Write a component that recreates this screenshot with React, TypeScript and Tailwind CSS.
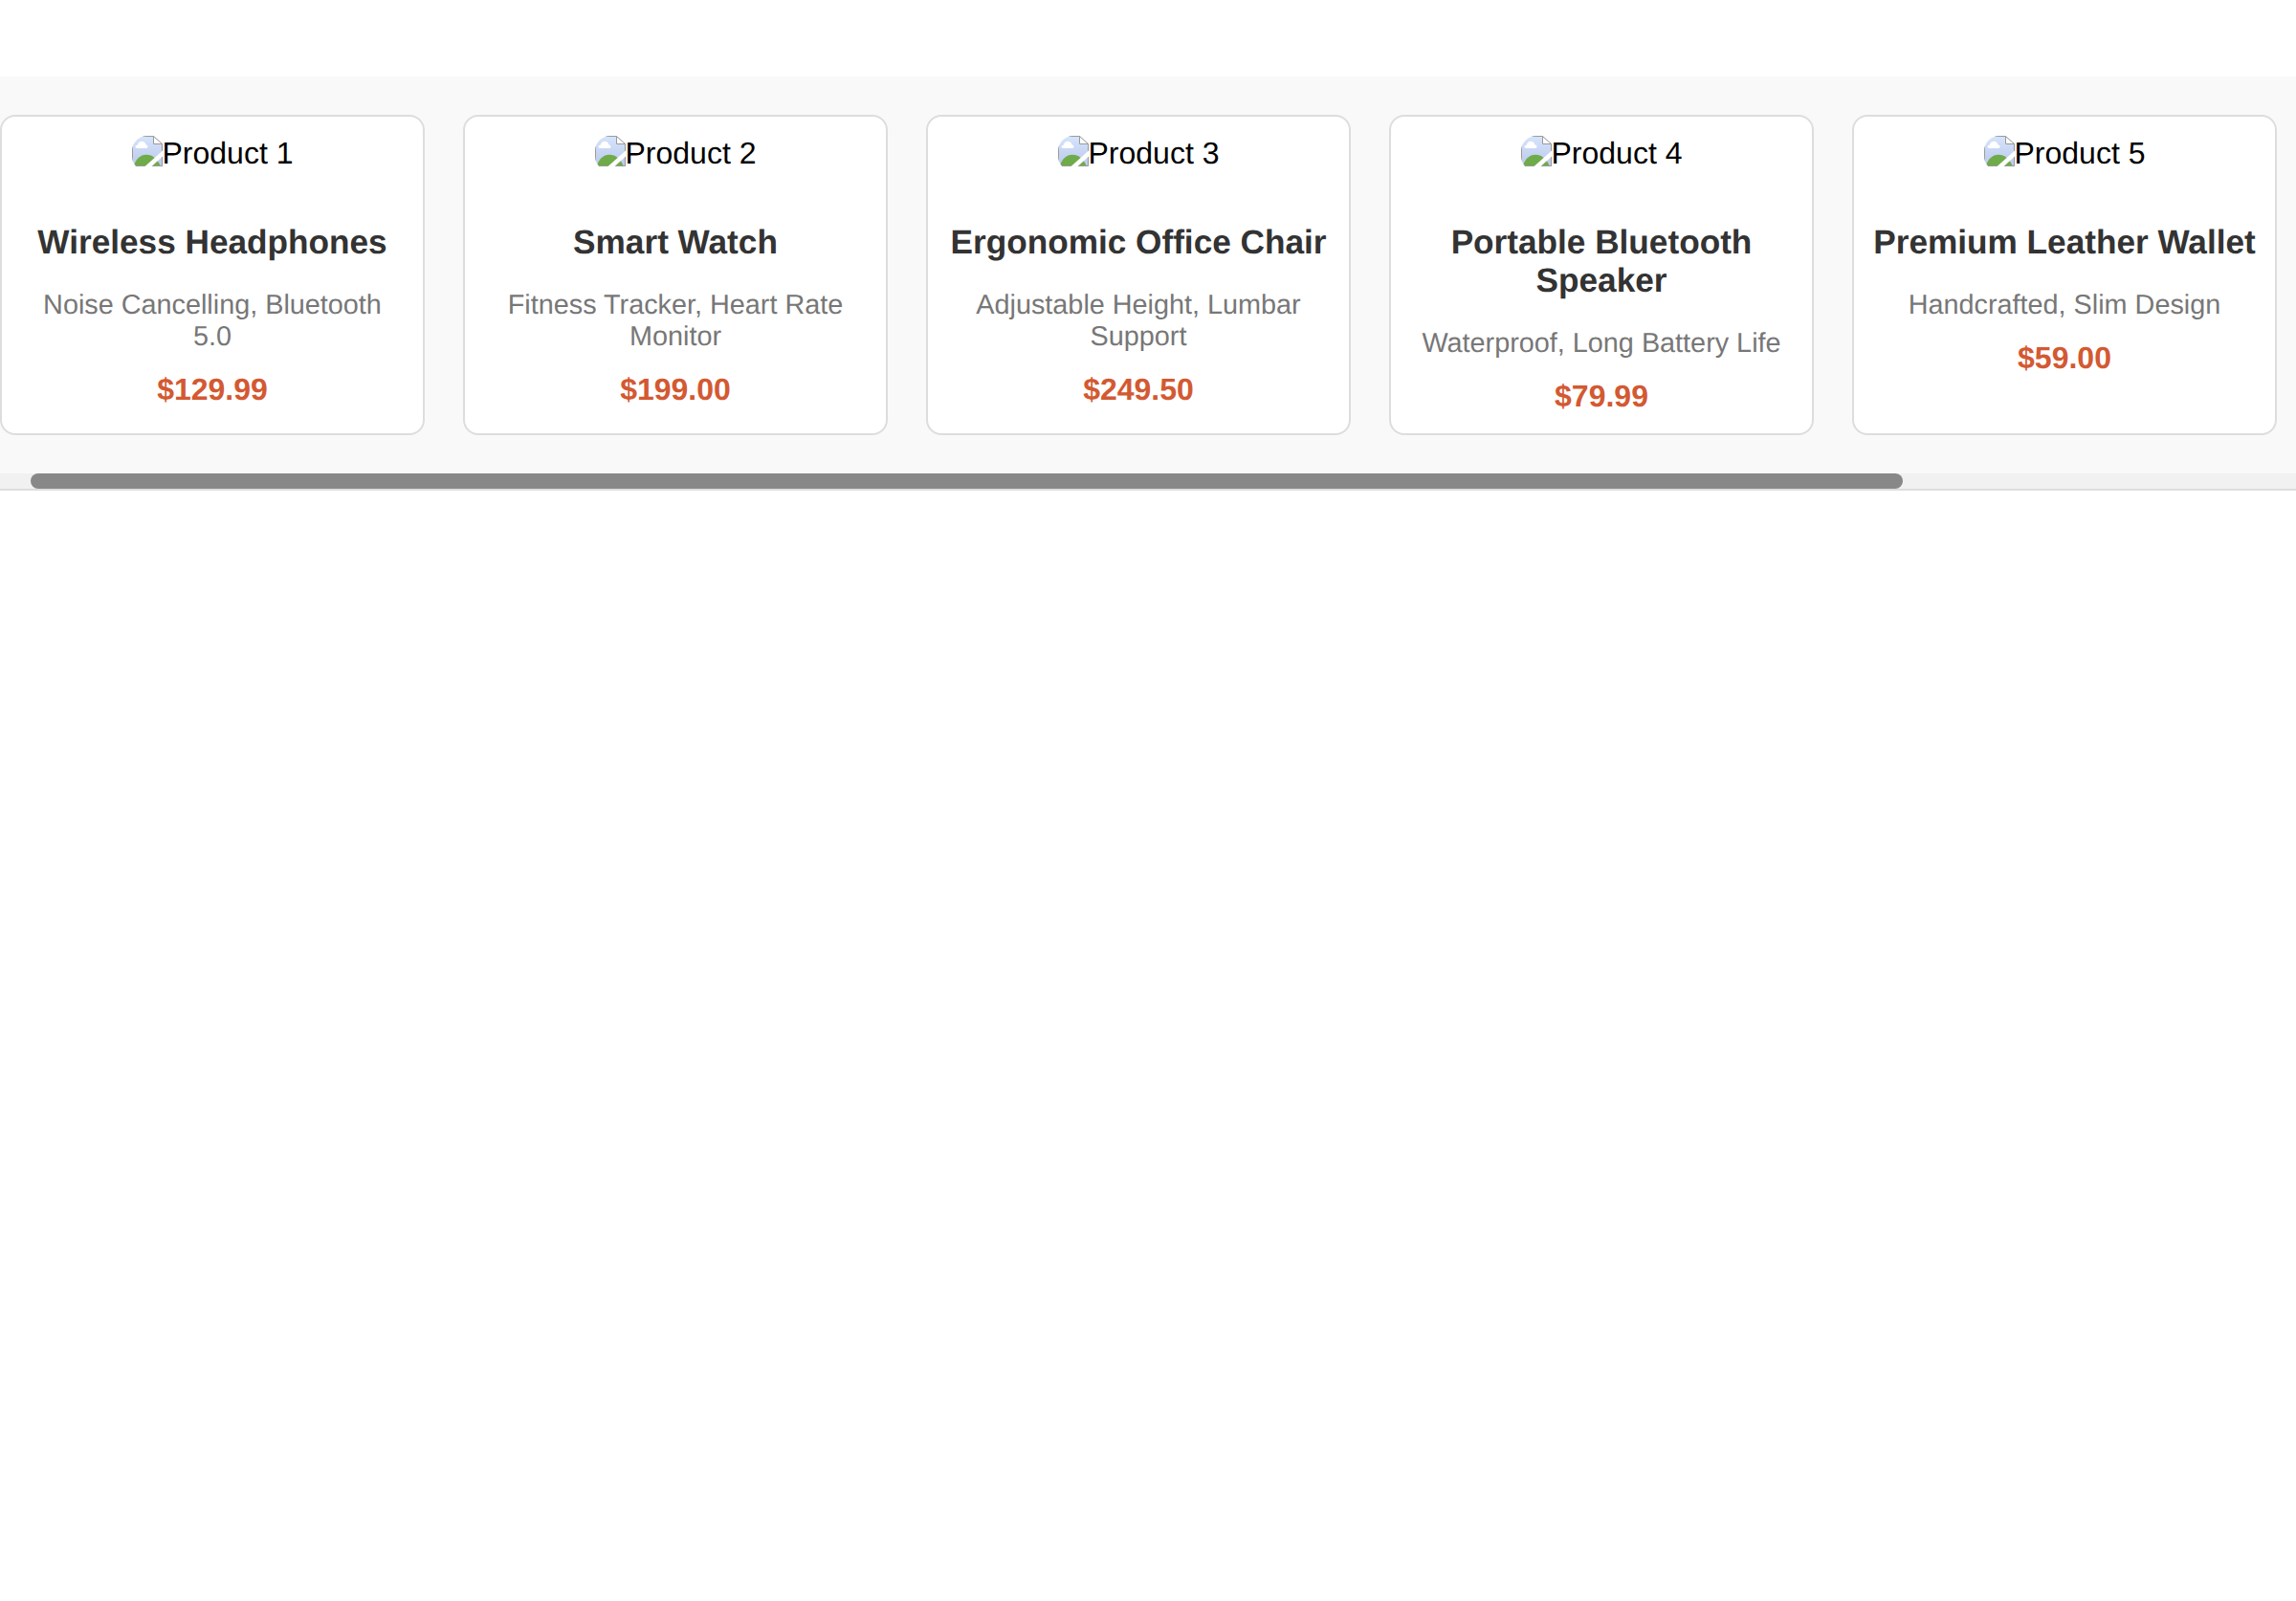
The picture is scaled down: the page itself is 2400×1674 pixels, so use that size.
const products = [
  { alt: 'Product 1', title: 'Wireless Headphones', description: 'Noise Cancelling, Bluetooth 5.0', price: '$129.99' },
  { alt: 'Product 2', title: 'Smart Watch', description: 'Fitness Tracker, Heart Rate Monitor', price: '$199.00' },
  { alt: 'Product 3', title: 'Ergonomic Office Chair', description: 'Adjustable Height, Lumbar Support', price: '$249.50' },
  { alt: 'Product 4', title: 'Portable Bluetooth Speaker', description: 'Waterproof, Long Battery Life', price: '$79.99' },
  { alt: 'Product 5', title: 'Premium Leather Wallet', description: 'Handcrafted, Slim Design', price: '$59.00' },
];

function MissingImageIcon() {
  return (
    <svg width="32" height="32" viewBox="0 0 32 32" className="block shrink-0" aria-hidden="true">
      <defs>
        <linearGradient id="sky" x1="0" y1="0" x2="0" y2="1">
          <stop offset="0" stopColor="#d6e4fb" />
          <stop offset="1" stopColor="#bac9ec" />
        </linearGradient>
      </defs>
      <path d="M0 0H22.5L32 8.5V32H0Z" fill="url(#sky)" />
      <path d="M5.6 13C2.8 13 2.8 9.9 5.8 9.5C6.3 7.2 7.8 5.8 10.2 5.8C12.6 5.8 14 7.2 14.3 9.2C17.2 9.5 17.1 13 14.6 13Z" fill="#fff" />
      <path d="M1.5 32C4 24.5 8.5 19.7 15 19.7C21.5 19.7 26.500 24 30 32Z" fill="#70ab4a" />
      <path d="M22 0.5L31.5 8.5H22Z" fill="#fff" />
      <path d="M0.5 0V31.5H31.5V8.5L22.5 0.5H0" fill="none" stroke="#9a9a9a" />
      <path d="M22.5 0.5V8.5H31.5" fill="none" stroke="#9a9a9a" />
      <path d="M13.5 32L32 15.5V21.5L20.5 32Z" fill="#fff" />
    </svg>
  );
}

export default function App() {
  return (
    <main className="min-h-[1674px] overflow-hidden bg-white pt-20 font-['Liberation_Sans',Arial,sans-serif] text-black [text-rendering:geometricPrecision]">
      <section className="border-b-2 border-[#ddd] bg-[#f9f9f9]">
        <div className="flex gap-10 py-10">
          {products.map((product) => (
            <article
              key={product.alt}
              className="flex w-[444px] shrink-0 flex-col items-center rounded-2xl border-2 border-[#ddd] bg-white px-5 pt-5 pb-5 text-center"
            >
              <div className="flex h-[37px] items-start overflow-hidden rounded-l-2xl">
                <MissingImageIcon />
                <span className="text-[32px] leading-[37px]">{product.alt}</span>
              </div>
              <h3 className="mt-[55px] text-[35.2px] leading-10 font-bold text-[#333]">{product.title}</h3>
              <p className="mt-[29px] text-[28.8px] leading-[33px] text-[#777]">{product.description}</p>
              <p className="mt-5 text-[32px] leading-[37px] font-bold text-[#d35932]">{product.price}</p>
            </article>
          ))}
        </div>
        <div className="h-4 bg-[#f1f1f1] pl-8">
          <div className="h-4 w-[1957px] rounded-full bg-[#888]" />
        </div>
      </section>
    </main>
  );
}
